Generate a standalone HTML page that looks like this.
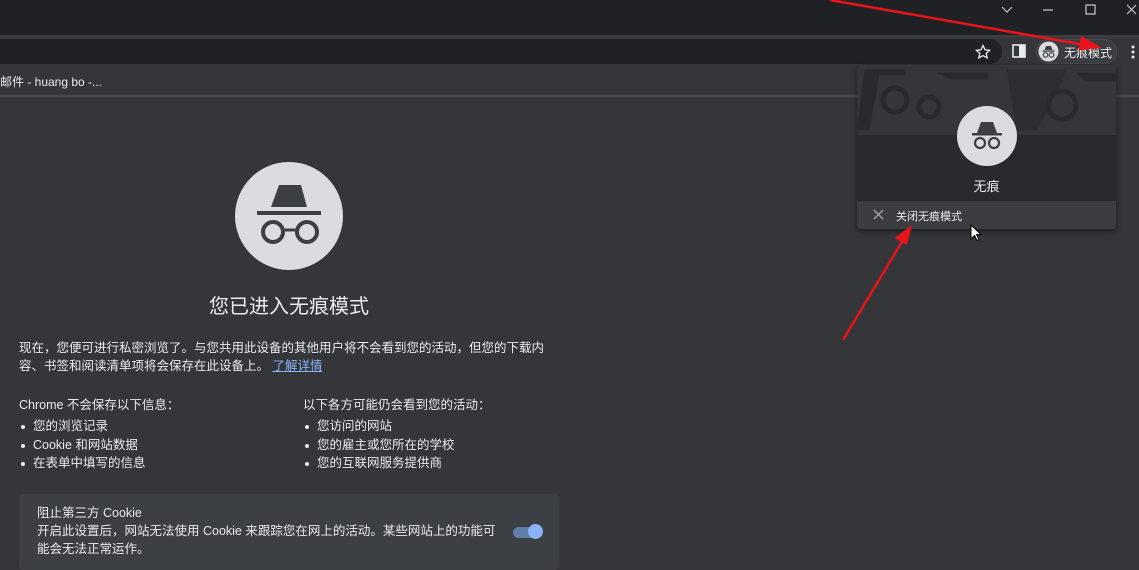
<!DOCTYPE html>
<html><head><meta charset="utf-8"><style>
*{margin:0;padding:0;box-sizing:border-box}
body{width:1139px;height:570px;overflow:hidden;background:#35363a;font-family:"Liberation Sans","Noto Sans CJK SC",sans-serif;color:#e8eaed;position:relative}
.abs{position:absolute}
.t{font-size:13px;line-height:18px;color:#e8eaed}
ul{list-style:none}
li{font-size:12.5px;line-height:18.5px;padding-left:14px;position:relative}
li:before{content:"";position:absolute;left:2px;top:8px;width:4px;height:4px;border-radius:2px;background:#e8eaed}
</style></head><body>
<div class="abs" style="left:0;top:0;width:1139px;height:35px;background:#202124"></div>
<div class="abs" style="left:0;top:35px;width:1139px;height:3px;background:#3c3d41"></div>
<div class="abs" style="left:0;top:38px;width:1139px;height:27px;background:#35363a"></div>
<div class="abs" style="left:0;top:39px;width:1002px;height:25px;background:#202124;border-radius:0 13px 13px 0"></div>
<div class="abs" style="left:0;top:95px;width:1139px;height:2px;background:#4a4b4f"></div>
<!-- window controls -->
<svg class="abs" style="left:995px;top:0" width="144" height="20"><g stroke="#c8c8c8" stroke-width="1.2" fill="none"><path d="M7 7l5 5 5-5"/><path d="M48 10h10"/><rect x="91" y="5" width="9" height="9"/><path d="M132 5l9 9M141 5l-9 9"/></g></svg>
<!-- star -->
<svg class="abs" style="left:975px;top:44px" width="16" height="16"><path d="M8 1.5l2 4.3 4.6.5-3.4 3.1 1 4.6L8 11.6 3.8 14l1-4.6L1.4 6.3 6 5.8z" fill="none" stroke="#e8eaed" stroke-width="1.3"/></svg>
<svg class="abs" style="left:1012px;top:44px" width="14" height="14"><rect x="1" y="1" width="12" height="12" fill="none" stroke="#e8eaed" stroke-width="1.6"/><rect x="7" y="1" width="6" height="12" fill="#e8eaed"/></svg>
<div class="abs" style="left:1036px;top:39px;width:81px;height:25px;border-radius:13px;background:#3c3d41;border:1px solid #4a4b4f"></div>
<svg class="abs" style="left:1038px;top:41px" width="21" height="21"><circle cx="10.5" cy="10.5" r="10" fill="#dadce0"/><path d="M8 5h5l1.5 4h-8z" fill="#3c4043"/><rect x="4.5" y="9.5" width="12" height="1.3" fill="#3c4043"/><circle cx="7.5" cy="14" r="2.3" fill="none" stroke="#3c4043" stroke-width="1.2"/><circle cx="13.5" cy="14" r="2.3" fill="none" stroke="#3c4043" stroke-width="1.2"/></svg>
<div class="abs" style="left:1064px;top:44px;font-size:12px;color:#e8eaed">无痕模式</div>
<svg class="abs" style="left:1130px;top:44px" width="6" height="16"><circle cx="3" cy="3" r="1.5" fill="#e8eaed"/><circle cx="3" cy="8" r="1.5" fill="#e8eaed"/><circle cx="3" cy="13" r="1.5" fill="#e8eaed"/></svg>
<div class="abs" style="left:0;top:73px;font-size:12px;color:#e8eaed">邮件 - huang bo -...</div>
<!-- main -->
<svg class="abs" style="left:234px;top:161px" width="110" height="110"><circle cx="55" cy="55" r="54" fill="#dadce0"/><path d="M47 24h22l6 22H39z" fill="#3c4043" transform="translate(-2,0)"/><rect x="23" y="50" width="64" height="4" fill="#3c4043"/><circle cx="39" cy="71" r="10" fill="none" stroke="#3c4043" stroke-width="4"/><circle cx="73" cy="71" r="10" fill="none" stroke="#3c4043" stroke-width="4"/><path d="M49 69h14" stroke="#3c4043" stroke-width="3"/></svg>
<div class="abs" style="left:0;width:578px;top:290px;text-align:center;font-size:20px;color:#e8eaed">您已进入无痕模式</div>
<div class="abs t" style="left:19px;top:339px;width:540px;font-size:12.5px">现在，您便可进行私密浏览了。与您共用此设备的其他用户将不会看到您的活动，但您的下载内容、书签和阅读清单项将会保存在此设备上。 <span style="color:#8ab4f8;text-decoration:underline">了解详情</span></div>
<div class="abs t" style="left:19px;top:396px;font-size:12.5px">Chrome 不会保存以下信息：</div>
<ul class="abs" style="left:19px;top:417px"><li>您的浏览记录</li><li>Cookie 和网站数据</li><li>在表单中填写的信息</li></ul>
<div class="abs t" style="left:303px;top:396px;font-size:12.5px">以下各方可能仍会看到您的活动：</div>
<ul class="abs" style="left:303px;top:417px"><li>您访问的网站</li><li>您的雇主或您所在的学校</li><li>您的互联网服务提供商</li></ul>
<div class="abs" style="left:19px;top:494px;width:540px;height:76px;background:#3c3f43;border-radius:4px"></div>
<div class="abs t" style="left:37px;top:504px;font-size:12.5px">阻止第三方 Cookie</div>
<div class="abs t" style="left:37px;top:522px;width:470px;font-size:12.5px">开启此设置后，网站无法使用 Cookie 来跟踪您在网上的活动。某些网站上的功能可能会无法正常运作。</div>
<div class="abs" style="left:513px;top:527px;width:26px;height:11px;border-radius:6px;background:#5f7ea8"></div>
<div class="abs" style="left:528px;top:524px;width:15px;height:15px;border-radius:8px;background:#8ab4f8"></div>
<!-- popup -->
<div class="abs" style="left:857px;top:65px;width:259px;height:164px;background:#292a2d;border-radius:4px;box-shadow:0 2px 6px rgba(0,0,0,.5);overflow:hidden">
<div class="abs" style="left:0;top:0;width:259px;height:70px;background:#35363a"></div>
<svg class="abs" style="left:0;top:0" width="259" height="70"><g fill="#292a2d" stroke="#292a2d"><path d="M8 5h40v5H22l-10 55H0z"/><circle cx="38" cy="35" r="12" fill="none" stroke-width="5"/><circle cx="72" cy="42" r="10" fill="none" stroke-width="5"/><path d="M80 8h50v6H95z"/><path d="M150 5h60l-30 60h-20z" opacity=".6"/><circle cx="205" cy="40" r="14" fill="none" stroke-width="5"/><path d="M220 8h39v8h-30z"/></g></svg>
<div class="abs" style="left:100px;top:41px;width:60px;height:60px;border-radius:30px;background:#dadce0"></div>
<svg class="abs" style="left:100px;top:41px" width="60" height="60"><path d="M24 16h12l4 11H20z" fill="#3c4043"/><rect x="15" y="27" width="30" height="2.5" fill="#3c4043"/><circle cx="23" cy="37" r="5" fill="none" stroke="#3c4043" stroke-width="2.2"/><circle cx="37" cy="37" r="5" fill="none" stroke="#3c4043" stroke-width="2.2"/></svg>
<div class="abs" style="left:0;width:259px;top:111px;text-align:center;font-size:13px">无痕</div>
<div class="abs" style="left:0;top:136px;width:259px;height:28px;background:#3c3d41"></div>
<svg class="abs" style="left:16px;top:144px" width="11" height="11"><path d="M1 1l9 9M10 1l-9 9" stroke="#9aa0a6" stroke-width="1.5"/></svg>
<div class="abs" style="left:39px;top:143px;font-size:11px;color:#e8eaed">关闭无痕模式</div>
</div>
<!-- cursor -->
<svg class="abs" style="left:970px;top:224px" width="12" height="18"><path d="M1 1v14l3.5-3.5 2.5 5 2-1-2.5-5H11z" fill="#fff" stroke="#000"/></svg>
<!-- red arrows -->
<svg class="abs" style="left:0;top:0" width="1139" height="570"><g stroke="#e8141a" stroke-width="2.5" fill="#e8141a"><path d="M830 0L1085 45"/><path d="M1098 47l-16-9-2 11z"/><path d="M843 340L903 240"/><path d="M910 228l-13 10 9 5z"/></g></svg>
</body></html>
